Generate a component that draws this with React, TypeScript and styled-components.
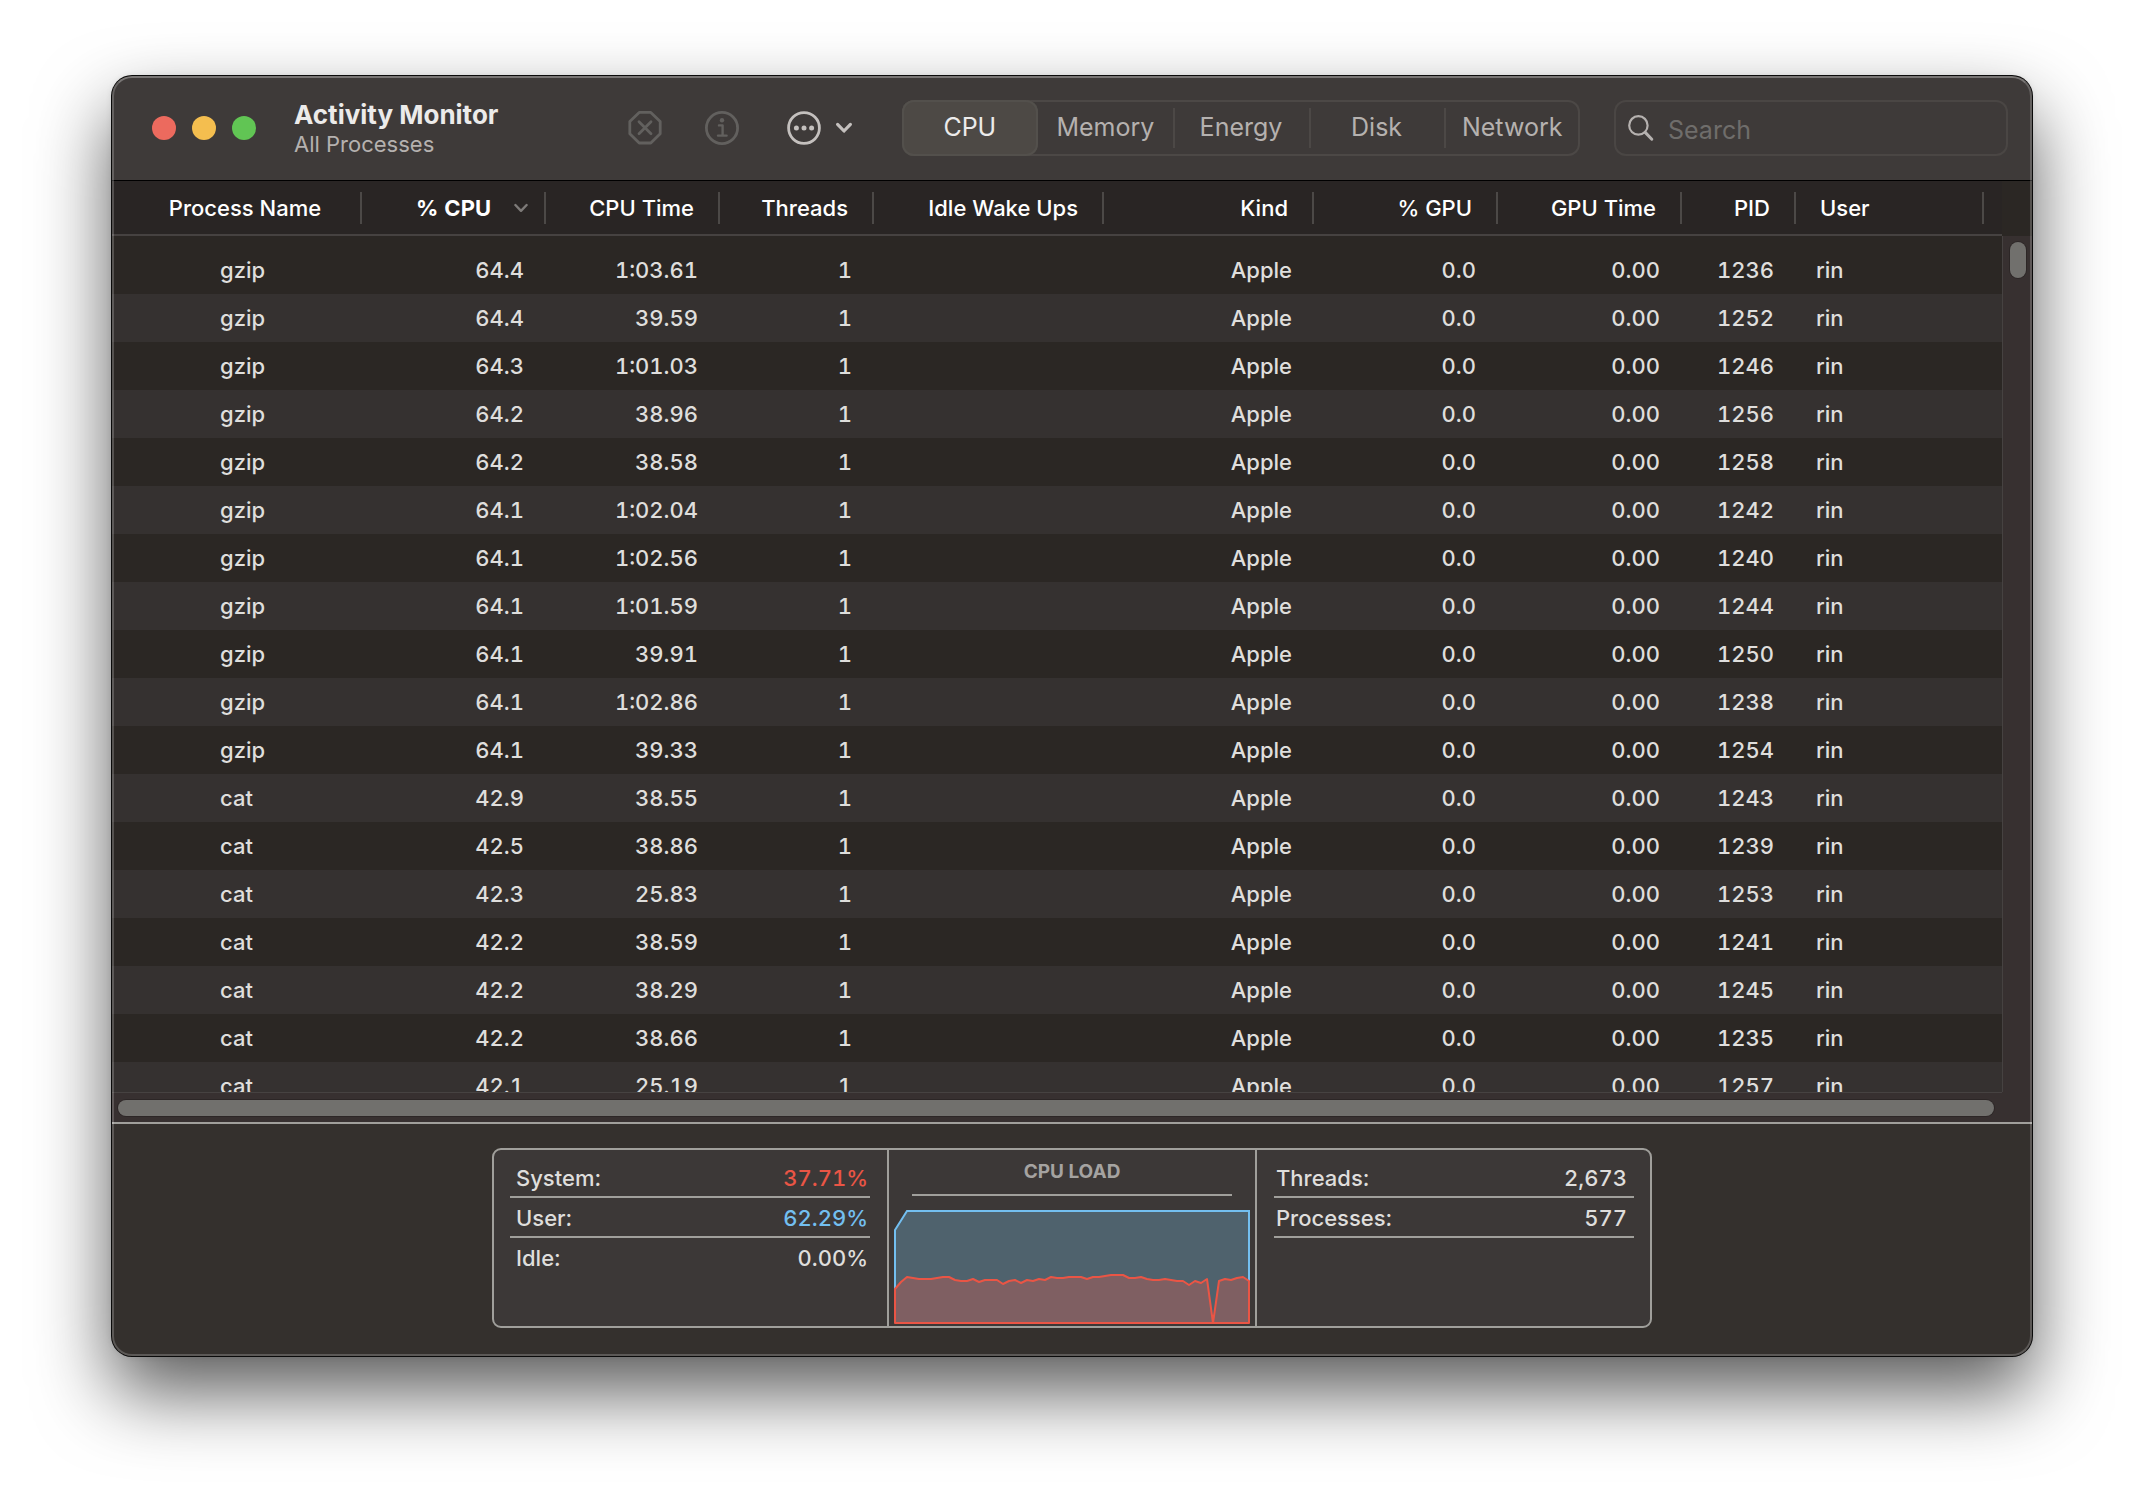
import React from "react";
import styled, { createGlobalStyle } from "styled-components";

const palette = {
  toolbar: "#3e3a39",
  header: "#292524",
  rowDark: "#2b2724",
  rowLight: "#353130",
  track: "#373030",
  thumb: "#71706d",
  footer: "#34302d",
  panel: "#3c3837",
  rule: "#a09f9b",
  hairline: "#464241",
  separator: "#4c4947",
  text: "#dfdedc",
  muted: "#b5b1af",
  disabled: "#62605e",
  system: "#ea5545",
  user: "#73bff0",
};

const GlobalStyle = createGlobalStyle`
  *, *::before, *::after { box-sizing: border-box; }
  body {
    margin: 0;
    background: #fff;
    color: ${palette.text};
    font-family: Inter, "Liberation Sans", sans-serif;
    font-size: 22px;
    line-height: 28px;
  }
  button, input {
    margin: 0;
    padding: 0;
    border: 0;
    background: none;
    color: inherit;
    font: inherit;
  }
`;

const Desktop = styled.main`
  display: flex;
  height: 100vh;
  min-height: 900px;
  padding: 76px 112px 148px;
`;

const Window = styled.section`
  position: relative;
  display: flex;
  flex: 1;
  min-width: 0;
  flex-direction: column;
  overflow: hidden;
  border-radius: 20px;
  background: ${palette.footer};
  box-shadow:
    0 0 0 1px #0a0a0a,
    0 0 6px rgba(0, 0, 0, 0.1),
    0 36px 76px rgba(0, 0, 0, 0.65);

  &::after {
    content: "";
    position: absolute;
    inset: 0;
    border: 2px solid rgba(255, 255, 255, 0.2);
    border-top-color: rgba(255, 255, 255, 0.3);
    border-radius: inherit;
    pointer-events: none;
  }
`;

const Toolbar = styled.header`
  display: flex;
  flex: none;
  align-items: center;
  height: 105px;
  padding: 0 24px 0 40px;
  border-bottom: 1px solid #000;
  background: ${palette.toolbar};
`;

const TrafficLights = styled.div`
  display: flex;
  gap: 16px;
`;

const Light = styled.button<{ $color: string }>`
  width: 24px;
  height: 24px;
  border-radius: 50%;
  background: ${(p) => p.$color};
`;

const Titles = styled.div`
  flex: none;
  width: 333px;
  margin-left: 38px;
`;

const Title = styled.h1`
  margin: 0;
  color: #ecebea;
  font-size: 26px;
  font-weight: 700;
  line-height: 32px;
`;

const Subtitle = styled.p`
  margin: 0;
  color: ${palette.muted};
  line-height: 26px;
`;

const Tools = styled.div`
  display: flex;
  flex: none;
  align-items: center;
  gap: 46px;
  margin-right: 48px;
`;

const ProcessTools = styled.div`
  display: flex;
  gap: 41px;
`;

const Tool = styled.button`
  display: flex;
  align-items: center;
  gap: 12px;
  height: 40px;
  color: #c4c0be;

  &:disabled { color: ${palette.disabled}; }
  svg { display: block; }
`;

const Segments = styled.nav`
  display: grid;
  flex: none;
  grid-template-columns: repeat(5, 1fr);
  width: 678px;
  height: 56px;
  border-radius: 12px;
  box-shadow: inset 0 0 0 2px #4c4846;
`;

const Segment = styled.button<{ $active?: boolean; $divided?: boolean }>`
  display: flex;
  align-items: center;
  justify-content: center;
  padding-bottom: 2px;
  border-radius: 12px;
  background: ${(p) => (p.$active ? "#4d4945" : "none")};
  box-shadow: ${(p) => (p.$active ? "inset 0 0 0 2px #53504c" : "none")};
  color: ${(p) => (p.$active ? "#ecebea" : palette.muted)};
  font-size: 25px;

  ${(p) =>
    p.$divided &&
    `
    border-radius: 0;
    background: linear-gradient(#4c4846, #4c4846) left center / 2px 40px no-repeat;
  `}
`;

const Search = styled.label`
  display: flex;
  flex: 1;
  align-items: center;
  min-width: 0;
  height: 56px;
  margin-left: 34px;
  padding: 0 14px;
  border-radius: 12px;
  box-shadow: inset 0 0 0 2px #4a4644;
  color: ${palette.muted};

  svg { flex: none; }

  input {
    flex: 1;
    min-width: 0;
    height: 32px;
    margin: 4px 0 0 14px;
    outline: none;
    font-size: 25px;
  }
  input::placeholder { color: #6f6d6b; opacity: 1; }
`;

const ListArea = styled.div`
  display: grid;
  flex: 1;
  min-height: 0;
  grid-template-columns: minmax(0, 1fr) 30px;
  grid-template-rows: minmax(0, 1fr) 30px;
  background: ${palette.track};
`;

const Viewport = styled.div`
  overflow: hidden;
  background: ${palette.rowDark};
`;

const Table = styled.table`
  width: 100%;
  table-layout: fixed;
  border-collapse: separate;
  border-spacing: 0;
  font-weight: 500;
  font-variant-numeric: tabular-nums;
`;

const HeadCell = styled.th<{ $align: Align; $sorted?: boolean }>`
  height: 55px;
  padding: 0;
  border-bottom: 2px solid ${palette.hairline};
  background: ${palette.header};
  color: #fff;
  font-weight: ${(p) => (p.$sorted ? 700 : 500)};
`;

const HeadButton = styled.button<{ $align: Align; $sorted?: boolean }>`
  display: flex;
  align-items: center;
  justify-content: ${(p) =>
    p.$align === "right" ? "flex-end" : p.$align === "center" ? "center" : "flex-start"};
  gap: 23px;
  width: 100%;
  height: 32px;
  padding-right: ${(p) => (p.$sorted ? 16 : p.$align === "right" ? 24 : 0)}px;
  padding-left: ${(p) => (p.$align === "left" ? 24 : p.$align === "center" ? 18 : 0)}px;
  border-right: 2px solid ${palette.separator};
  white-space: nowrap;
`;

const Spacer = styled.tr`
  td { height: 10px; padding: 0; }
`;

const Row = styled.tr`
  &:nth-child(even) { background: ${palette.rowLight}; }
`;

const Cell = styled.td<{ $align: Align }>`
  height: 48px;
  padding: 0 ${(p) => (p.$align === "right" ? 22 : 0)}px 0
    ${(p) => (p.$align === "left" ? 20 : p.$align === "center" ? 108 : 0)}px;
  text-align: ${(p) => (p.$align === "right" ? "right" : "left")};
`;

const SideColumn = styled.div`
  display: flex;
  flex-direction: column;
`;

const Corner = styled.div`
  height: 55px;
  background: ${palette.rowDark};
`;

const VerticalTrack = styled.div`
  flex: 1;
  padding: 6px 7px;
  border-left: 1px solid ${palette.hairline};
`;

const HorizontalTrack = styled.div`
  padding: 7px 8px 0 6px;
  border-top: 1px solid ${palette.hairline};
`;

const Thumb = styled.div<{ $vertical?: boolean }>`
  width: ${(p) => (p.$vertical ? "16px" : "auto")};
  height: ${(p) => (p.$vertical ? 36 : 16)}px;
  border-radius: 8px;
  background: ${palette.thumb};
  box-shadow: 0 0 0 1px rgba(0, 0, 0, 0.2);
`;

const Footer = styled.footer`
  display: flex;
  flex: none;
  justify-content: center;
  padding: 24px 24px 28px;
  border-top: 2px solid ${palette.rule};
  background: ${palette.footer};
`;

const Summary = styled.div`
  display: grid;
  grid-template-columns: minmax(0, 1fr) 370px minmax(0, 1fr);
  width: 1160px;
  height: 180px;
  border: 2px solid ${palette.rule};
  border-radius: 9px;
  background: ${palette.panel};
`;

const Stats = styled.dl<{ $end?: boolean }>`
  margin: 0;
  padding: ${(p) => (p.$end ? "8px 16px 8px 17px" : "8px 17px 8px 16px")};
  font-weight: 500;
`;

const Stat = styled.div<{ $ruled?: boolean; $end?: boolean }>`
  display: flex;
  justify-content: space-between;
  height: 40px;
  padding: 6px ${(p) => (p.$end ? 7 : 2)}px 0 ${(p) => (p.$end ? 2 : 6)}px;
  border-bottom: 2px solid ${(p) => (p.$ruled ? palette.rule : "transparent")};
`;

const StatValue = styled.dd<{ $color?: string }>`
  margin: 0;
  color: ${(p) => p.$color ?? palette.text};
  font-variant-numeric: tabular-nums;
`;

const Load = styled.figure`
  display: flex;
  flex-direction: column;
  align-items: center;
  margin: 0;
  border: solid ${palette.rule};
  border-width: 0 2px;

  svg { display: block; margin-top: 14px; }
`;

const LoadTitle = styled.figcaption`
  width: 320px;
  height: 46px;
  padding-top: 8px;
  border-bottom: 2px solid ${palette.rule};
  color: #a5a3a1;
  font-size: 19px;
  font-weight: 700;
  text-align: center;
`;

type Align = "left" | "right" | "center";

interface Column {
  label: string;
  width: number;
  align: Align;
  sorted?: boolean;
}

const columns: Column[] = [
  { label: "Process Name", width: 250, align: "center" },
  { label: "% CPU", width: 184, align: "right", sorted: true },
  { label: "CPU Time", width: 174, align: "right" },
  { label: "Threads", width: 154, align: "right" },
  { label: "Idle Wake Ups", width: 230, align: "right" },
  { label: "Kind", width: 210, align: "right" },
  { label: "% GPU", width: 184, align: "right" },
  { label: "GPU Time", width: 184, align: "right" },
  { label: "PID", width: 114, align: "right" },
  { label: "User", width: 188, align: "left" },
];

const processes: [string, string, string, string][] = [
  ["gzip", "64.4", "1:03.61", "1236"],
  ["gzip", "64.4", "39.59", "1252"],
  ["gzip", "64.3", "1:01.03", "1246"],
  ["gzip", "64.2", "38.96", "1256"],
  ["gzip", "64.2", "38.58", "1258"],
  ["gzip", "64.1", "1:02.04", "1242"],
  ["gzip", "64.1", "1:02.56", "1240"],
  ["gzip", "64.1", "1:01.59", "1244"],
  ["gzip", "64.1", "39.91", "1250"],
  ["gzip", "64.1", "1:02.86", "1238"],
  ["gzip", "64.1", "39.33", "1254"],
  ["cat", "42.9", "38.55", "1243"],
  ["cat", "42.5", "38.86", "1239"],
  ["cat", "42.3", "25.83", "1253"],
  ["cat", "42.2", "38.59", "1241"],
  ["cat", "42.2", "38.29", "1245"],
  ["cat", "42.2", "38.66", "1235"],
  ["cat", "42.1", "25.19", "1257"],
];

const tabs = ["CPU", "Memory", "Energy", "Disk", "Network"];

/* Height of the system load above the baseline, one sample every six pixels. */
const systemLoad = [
  34, 41, 46, 45, 44, 44, 44, 45, 46, 46, 43, 42, 42, 44, 41, 43, 43, 43, 39, 42,
  43, 40, 43, 42, 44, 43, 46, 45, 45, 46, 46, 46, 44, 46, 46, 47, 48, 48, 48, 45,
  45, 46, 44, 43, 43, 44, 43, 42, 42, 38, 42, 40, 44, 0, 42, 44, 43, 45, 46, 42,
];

function LoadChart() {
  const points = systemLoad.map((v, i) => `${1 + i * 6},${113 - v}`);
  const system = points.join(" ");
  const systemDown = [...points].reverse().join(" ");
  const userTop = "1,20 13,1 355,1";
  return (
    <svg width="356" height="114" viewBox="0 0 356 114" role="img" aria-label="CPU load history">
      <polygon points={`${userTop} ${systemDown}`} fill="#4f626d" />
      <polygon points={`1,113 ${system} 355,113`} fill="#7f5f62" />
      <polyline points={`1,79 ${userTop} 355,71`} fill="none" stroke={palette.user} strokeWidth="2" />
      <polygon points={`1,113 ${system} 355,113`} fill="none" stroke={palette.system} strokeWidth="2" strokeLinejoin="round" />
    </svg>
  );
}

const StopIcon = () => (
  <svg width="36" height="36" viewBox="0 0 36 36" fill="none" stroke="currentColor" strokeWidth="2.8" strokeLinejoin="round" strokeLinecap="round">
    <path d="M12.2 2.4h11.6l9.4 9.2v12.2l-9.4 9.2H12.2l-9.4-9.2V11.6z" />
    <path d="M12 11.8l12 12M24 11.8l-12 12" />
  </svg>
);

const InfoIcon = () => (
  <svg width="36" height="36" viewBox="0 0 36 36" fill="none" stroke="currentColor" strokeWidth="2.8" strokeLinecap="round" strokeLinejoin="round">
    <circle cx="18" cy="18" r="15.6" />
    <path d="M15 15.4h3.6v10M14 25.6h8.6" strokeWidth="2.4" />
    <circle cx="18" cy="10.2" r="2.2" fill="currentColor" stroke="none" />
  </svg>
);

const MoreIcon = () => (
  <svg width="36" height="36" viewBox="0 0 36 36" fill="currentColor">
    <circle cx="18" cy="18" r="15.4" fill="none" stroke="currentColor" strokeWidth="2.8" />
    <circle cx="10.4" cy="18" r="2.5" />
    <circle cx="18" cy="18" r="2.5" />
    <circle cx="25.6" cy="18" r="2.5" />
  </svg>
);

const MenuChevron = () => (
  <svg width="20" height="14" viewBox="0 0 20 14" fill="none" stroke="currentColor" strokeWidth="3.2" strokeLinecap="round" strokeLinejoin="round">
    <path d="M3.6 3.4l6.4 6.6 6.4-6.6" />
  </svg>
);

const SortChevron = () => (
  <svg width="14" height="10" viewBox="0 0 14 10" fill="none" stroke="#7d7a78" strokeWidth="2.4" strokeLinecap="round" strokeLinejoin="round">
    <path d="M1.4 2l5.6 5.8L12.6 2" />
  </svg>
);

const SearchIcon = () => (
  <svg width="26" height="28" viewBox="0 0 26 28" fill="none" stroke="currentColor" strokeLinecap="round">
    <circle cx="10.4" cy="11.4" r="9.2" strokeWidth="2.2" />
    <path d="M17.2 18.4l6.6 6.8" strokeWidth="3" />
  </svg>
);

export default function App() {
  return (
    <>
      <GlobalStyle />
      <Desktop>
        <Window aria-label="Activity Monitor">
          <Toolbar>
            <TrafficLights>
              <Light $color="#ec6a5e" aria-label="Close" />
              <Light $color="#f4be4f" aria-label="Minimize" />
              <Light $color="#61c554" aria-label="Zoom" />
            </TrafficLights>
            <Titles>
              <Title>Activity Monitor</Title>
              <Subtitle>All Processes</Subtitle>
            </Titles>
            <Tools>
              <ProcessTools>
                <Tool disabled aria-label="Stop process"><StopIcon /></Tool>
                <Tool disabled aria-label="Inspect process"><InfoIcon /></Tool>
              </ProcessTools>
              <Tool aria-label="More options"><MoreIcon /><MenuChevron /></Tool>
            </Tools>
            <Segments aria-label="Resource">
              {tabs.map((tab, i) => (
                <Segment key={tab} $active={i === 0} $divided={i > 1} aria-pressed={i === 0}>
                  {tab}
                </Segment>
              ))}
            </Segments>
            <Search>
              <SearchIcon />
              <input type="search" placeholder="Search" aria-label="Search" />
            </Search>
          </Toolbar>

          <ListArea>
            <Viewport>
              <Table>
                <colgroup>
                  {columns.map((c) => (
                    <col key={c.label} style={{ width: c.width }} />
                  ))}
                  <col />
                </colgroup>
                <thead>
                  <tr>
                    {columns.map((c) => (
                      <HeadCell key={c.label} scope="col" $align={c.align} $sorted={c.sorted}>
                        <HeadButton $align={c.align} $sorted={c.sorted}>
                          {c.label}
                          {c.sorted && <SortChevron />}
                        </HeadButton>
                      </HeadCell>
                    ))}
                    <HeadCell as="td" $align="left" />
                  </tr>
                </thead>
                <tbody>
                  <Spacer><td colSpan={11} /></Spacer>
                </tbody>
                <tbody>
                  {processes.map(([name, cpu, time, pid]) => (
                    <Row key={pid}>
                      {[name, cpu, time, "1", "", "Apple", "0.0", "0.00", pid, "rin", ""].map((value, i) => (
                        <Cell key={i} $align={columns[i]?.align ?? "left"}>{value}</Cell>
                      ))}
                    </Row>
                  ))}
                </tbody>
              </Table>
            </Viewport>
            <SideColumn>
              <Corner />
              <VerticalTrack><Thumb $vertical /></VerticalTrack>
            </SideColumn>
            <HorizontalTrack><Thumb /></HorizontalTrack>
          </ListArea>

          <Footer>
            <Summary>
              <Stats>
                <Stat $ruled><dt>System:</dt><StatValue $color={palette.system}>37.71%</StatValue></Stat>
                <Stat $ruled><dt>User:</dt><StatValue $color={palette.user}>62.29%</StatValue></Stat>
                <Stat><dt>Idle:</dt><StatValue>0.00%</StatValue></Stat>
              </Stats>
              <Load>
                <LoadTitle>CPU LOAD</LoadTitle>
                <LoadChart />
              </Load>
              <Stats $end>
                <Stat $ruled $end><dt>Threads:</dt><StatValue>2,673</StatValue></Stat>
                <Stat $ruled $end><dt>Processes:</dt><StatValue>577</StatValue></Stat>
              </Stats>
            </Summary>
          </Footer>
        </Window>
      </Desktop>
    </>
  );
}
